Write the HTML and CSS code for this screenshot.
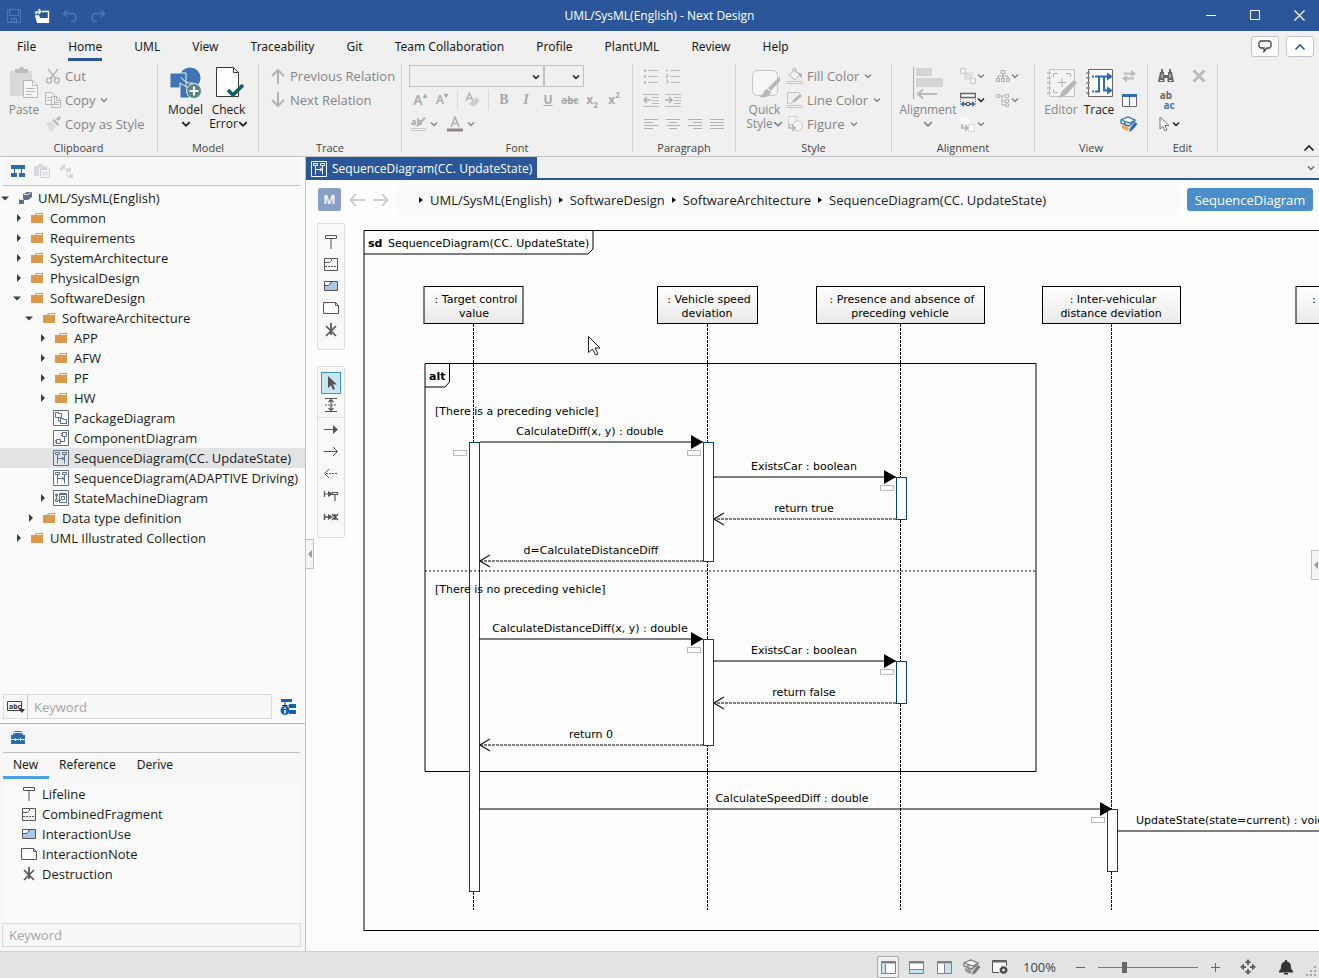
FILE: index.html
```html
<!DOCTYPE html>
<html lang="en">
<head>
  <meta charset="UTF-8">
  <meta name="viewport" content="width=device-width, initial-scale=1.0">
  <title>UML/SysML(English) - Next Design</title>
  <link rel="stylesheet" href="styles.css">
</head>
<body>
  <!-- shared icons -->
  <svg class="defs" width="0" height="0">
    <symbol id="chev" viewBox="0 0 8 8"><path d="M1 2.5l3 3 3-3" fill="none" stroke="currentColor" stroke-width="1.4"/></symbol>
    <symbol id="right" viewBox="0 0 10 10"><path d="M5 1l4 4-4 4z" fill="#3c3c3c"/></symbol>
    <symbol id="down" viewBox="0 0 10 10"><path d="M1 3.5h8L5 7.5z" fill="#3c3c3c"/></symbol>
    <symbol id="folder" viewBox="0 0 16 16"><path d="M2 5h4l1-2h7v10H2z" fill="#d99a4e"/><path d="M7.500 4.500h5.500" stroke="#fff3e0"/></symbol>
    <symbol id="sequence" viewBox="0 0 16 16"><path d="M.5.500h15v15H.500z M2.500 2.500h4v2h-4z M9.500 2.500h4v2h-4z M4.500 4.500v9 M11.500 4.500v9 M5 8.500h6 M9 6.500l2 2-2 2" fill="none" stroke="currentColor"/></symbol>
    <symbol id="package" viewBox="0 0 16 16"><path d="M.5.500h15v15H.500z M2.500 7.500v-5h3v1h3v4z M5.500 8v3h2 M7.500 13.500v-5h3v1h3v4z" fill="none" stroke="currentColor"/></symbol>
    <symbol id="component" viewBox="0 0 16 16"><path d="M.5.500h15v15H.500z M9.500 2.500h4v4h-4z M8 3.500h2 M8 5.500h2 M3.500 9.500h4v4h-4z M2 10.500h2 M2 12.500h2 M8 11.500h3.500V7" fill="none" stroke="currentColor"/></symbol>
    <symbol id="state" viewBox="0 0 16 16"><path d="M.5.500h15v15H.500z M6.500 3.500h7v9h-7z M8.500 6.500h3v3h-3z M6.500 4.500h7 M2.500 9.500h2v2h-2z M3.500 6v3 M5 10.500h3" fill="none" stroke="currentColor"/><circle cx="3.500" cy="5" r="1.500" fill="currentColor"/></symbol>
    <symbol id="lifeline" viewBox="0 0 16 16"><path d="M2.500 1.500h11v3h-11z M8 4.500V15" fill="none" stroke="#555"/></symbol>
    <symbol id="fragment" viewBox="0 0 16 16"><path d="M1.500 2.500h13v12h-13z M1.500 6.500h5l2-2v-2" fill="none" stroke="#555"/><path d="M2 10.500h12" stroke="#555" stroke-dasharray="2 1"/></symbol>
    <symbol id="use" viewBox="0 0 16 16"><path d="M1.500 3.500h13v9h-13z" fill="#a9c8e8" stroke="#555"/><path d="M2 7V4h6L5.500 7z" fill="#fff"/><path d="M1.500 7.500h4l2.500-2.500v-1.500" fill="none" stroke="#555"/></symbol>
    <symbol id="note" viewBox="0 0 16 16"><path d="M.5 2.500h12l3 3v8H.500z" fill="#fff" stroke="#555"/><path d="M12.500 2.500v3h3" fill="none" stroke="#555"/></symbol>
    <symbol id="destroy" viewBox="0 0 16 16"><path d="M8 1v12 M3 4l10 10 M13 4L3 14" stroke="#555" stroke-width="1.700" fill="none"/></symbol>
    <symbol id="pointer" viewBox="0 0 16 16"><path d="M5 1v12l3-2.500 2 4.500 2-1-2-4.500h4z"/></symbol>
    <symbol id="layers" viewBox="0 0 18 16"><path d="M1.500 3.500L8 1l7 3-5 3-6-2z" fill="#fff" stroke="currentColor" stroke-width="1.300"/><path d="M1 4v3l4 1.500M5 5v4l4 1 6-5" fill="none" stroke="currentColor" stroke-width="1.300"/><path class="accent" d="M2 9l6 2 1 2-2 2-5-3z"/><path d="M15 6l2.500 2-5 6-3.500 2 1-4z" fill="currentColor"/></symbol>
  </svg>

  <header class="titlebar">
    <div class="quick">
      <button aria-label="Save" class="dim"><svg width="14" height="14"><path d="M.5.500h13v13H.500z M2.500.500v6h9v-6 M4.500 13.500v-4h5v4 M7.500 10v3" fill="none" stroke="currentColor"/></svg></button>
      <button aria-label="Open"><svg width="16" height="16"><path d="M1 7.500L5 7l1 3h8v5H3z" fill="#fff"/><path d="M8 3.500h6.500V15 M2 6.500V4h4 M4.500 1L7 3.500 4.500 6" fill="none" stroke="#fff" stroke-width="1.400"/></svg></button>
      <button aria-label="Undo" class="dim"><svg width="16" height="14"><path d="M5 1L1.500 4.500 5 8 M2 4.500h8a4 4 0 0 1 0 8H9" fill="none" stroke="currentColor" stroke-width="1.600"/></svg></button>
      <button aria-label="Redo" class="dim"><svg width="16" height="14"><path d="M11 1l3.500 3.500L11 8 M14 4.500H6a4 4 0 0 0 0 8h1" fill="none" stroke="currentColor" stroke-width="1.600"/></svg></button>
    </div>
    <h1>UML/SysML(English) - Next Design</h1>
    <div class="window">
      <button aria-label="Minimize"><svg width="11" height="11"><path d="M0 5.500h10" stroke="#fff"/></svg></button>
      <button aria-label="Maximize"><svg width="11" height="11"><path d="M.5.500h9v9h-9z" fill="none" stroke="#fff"/></svg></button>
      <button aria-label="Close"><svg width="11" height="11"><path d="M.5.500l10 10M10.500.500l-10 10" stroke="#fff" stroke-width="1.200"/></svg></button>
    </div>
  </header>

  <nav class="menu">
    <button>File</button>
    <button class="active">Home</button>
    <button>UML</button>
    <button>View</button>
    <button>Traceability</button>
    <button>Git</button>
    <button>Team Collaboration</button>
    <button>Profile</button>
    <button>PlantUML</button>
    <button>Review</button>
    <button>Help</button>
    <div class="menu-right">
      <button aria-label="Feedback"><svg width="14" height="13"><path d="M2.500 1h9l1.500 1.500v4L11.500 8H9l-3 3.500V8H2.500L1 6.500v-4z" fill="none" stroke="#444" stroke-width="1.300"/></svg></button>
      <button aria-label="Hide ribbon"><svg width="12" height="8"><path d="M1.500 6.500L6 2l4.500 4.500" fill="none" stroke="#2b579a" stroke-width="1.600"/></svg></button>
    </div>
  </nav>

  <section class="ribbon">
    <div class="group clipboard">
      <div class="tools">
        <button class="big off"><svg width="32" height="32"><path d="M2 4h22v25H2z" fill="#d6d8da"/><path d="M7 2h4a2 2 0 0 1 5 0h4v4H7z" fill="#bcbcbc"/><path d="M15.500 13.500h9l5 5v12h-14z" fill="#f6f6f6" stroke="#b8b8b8"/><path d="M24.500 13.500v5h5 M18 21.500h9 M18 24.500h9 M18 27.500h6" fill="none" stroke="#b8b8b8"/></svg><span>Paste</span></button>
        <div class="stack">
          <button class="small off"><svg width="16" height="16"><path d="M3 1l8 10 M13 1L5 11" stroke="#b8b8b8" stroke-width="1.600"/><circle cx="4" cy="12.500" r="2.500" fill="none" stroke="#b8b8b8" stroke-width="1.500"/><circle cx="12" cy="12.500" r="2.500" fill="none" stroke="#b8b8b8" stroke-width="1.500"/></svg>Cut</button>
          <button class="small off"><svg width="16" height="16"><path d="M.5.500h6l3 3v9h-9z M2 5.500h4 M2 8.500h4 M6.500 4.500h5l4 4v7h-9z" fill="#f2f2f2" stroke="#b8b8b8"/><path d="M11.500 4.500v4h4 M9 10.500h5 M9 12.500h5" fill="none" stroke="#b8b8b8"/></svg>Copy<svg class="chev"><use href="#chev"/></svg></button>
          <button class="small off"><svg width="16" height="16"><path d="M1 8l5-3 5 5-3 5H5z" fill="#dcdcdc"/><path d="M7 4l2-1 5 5-1 2z M11 3l3-3 2 2-3 3z" fill="#b8b8b8"/></svg>Copy as Style</button>
        </div>
      </div>
      <h2>Clipboard</h2>
    </div>

    <div class="group model">
      <div class="tools">
        <button class="big"><svg width="32" height="32"><circle cx="20" cy="11" r="10.500" fill="#3f75b5"/><path d="M0 6h16v15H0z" fill="#3f75b5" stroke="#f0f0f0"/><path d="M10 31V16l13 8-1 7z" fill="#3f75b5" stroke="#f0f0f0"/><path d="M11 10q4 7 12 6" fill="none" stroke="#f0f0f0"/><circle cx="24" cy="24" r="7.500" fill="#5b8583" stroke="#f0f0f0"/><path d="M24 19.500v9M19.500 24h9" stroke="#fff" stroke-width="2"/></svg><span>Model</span><svg class="chev"><use href="#chev"/></svg></button>
        <button class="big"><svg width="32" height="32"><path d="M3.500.500h17l5 5v24h-22z" fill="#fff" stroke="#3e3638"/><path d="M20.500.500v5h5" fill="none" stroke="#3e3638"/><path d="M15 23l5 5 10-10" fill="none" stroke="#0c5c68" stroke-width="3.500"/></svg><span>Check</span><span>Error<svg class="chev"><use href="#chev"/></svg></span></button>
      </div>
      <h2>Model</h2>
    </div>

    <div class="group trace">
      <div class="tools">
        <div class="stack">
          <button class="small off"><svg width="16" height="16"><path d="M8 16V2 M2 8l6-6 6 6" fill="none" stroke="#b4b4b4" stroke-width="2"/></svg>Previous Relation</button>
          <button class="small off"><svg width="16" height="16"><path d="M8 0v14 M2 8l6 6 6-6" fill="none" stroke="#b4b4b4" stroke-width="2"/></svg>Next Relation</button>
        </div>
      </div>
      <h2>Trace</h2>
    </div>

    <div class="group font">
      <div class="tools column">
        <div class="line">
          <label class="combo wide"><select aria-label="Font family"></select><svg class="chev"><use href="#chev"/></svg></label>
          <label class="combo"><select aria-label="Font size"></select><svg class="chev"><use href="#chev"/></svg></label>
        </div>
        <div class="line">
          <button class="glyph grow">A<sup>▴</sup></button>
          <button class="glyph shrink">A<sup>▾</sup></button>
          <i class="sep"></i>
          <button class="glyph" aria-label="Clear format"><svg width="16" height="16"><path d="M1 9l3.500-8L8 9M2.500 6.500h4" fill="none" stroke="#b0b0b0" stroke-width="1.400"/><path d="M4 12l7-7 4 4-6 6z" fill="#cfcfd1"/></svg></button>
          <i class="sep"></i>
          <button class="glyph serif">B</button>
          <button class="glyph serif"><em>I</em></button>
          <button class="glyph"><u>U</u></button>
          <button class="glyph"><s>abc</s></button>
          <button class="glyph">x<sub>2</sub></button>
          <button class="glyph">x<sup>2</sup></button>
        </div>
        <div class="line">
          <button class="drop off" aria-label="Highlight"><svg width="18" height="16"><path d="M2.500 12.500h14v2h-14z" fill="#f6f6f6" stroke="#c8c8c8"/><path d="M8 9l7-8 2 1-7 8-3 1z" fill="#b8b8b8"/><text x="2" y="9" class="tiny">ab</text></svg><svg class="chev"><use href="#chev"/></svg></button>
          <button class="drop off" aria-label="Font color"><svg width="18" height="16"><path d="M5 11l4-10 4 10M6.500 7.500h5" fill="none" stroke="#b0b0b0" stroke-width="1.500"/><path d="M1 14h16" stroke="#8e878e" stroke-width="3"/></svg><svg class="chev"><use href="#chev"/></svg></button>
        </div>
      </div>
      <h2>Font</h2>
    </div>

    <div class="group paragraph">
      <div class="tools column">
        <div class="line">
          <button class="glyph" aria-label="Bullets"><svg width="16" height="16"><path d="M1 2.500h2M1 8.500h2M1 14.500h2" stroke="#aaa" stroke-width="2"/><path d="M5 2.500h10M5 8.500h10M5 14.500h10" stroke="#bbb"/></svg></button>
          <button class="glyph" aria-label="Numbering"><svg width="16" height="16"><path d="M2 1v3M1 6.500h2v1.500H1v1.500h2M1 12h2v3H1M5 2.500h10M5 8.500h10M5 14.500h10" fill="none" stroke="#bbb"/></svg></button>
        </div>
        <div class="line">
          <button class="glyph" aria-label="Outdent"><svg width="16" height="14"><path d="M0 1.500h16M9 4.500h7M9 7.500h7M9 10.500h7M0 13.500h16" stroke="#bbb"/><path d="M8 7H1M4 4L1 7l3 3" fill="none" stroke="#b0b0b0" stroke-width="1.500"/></svg></button>
          <button class="glyph" aria-label="Indent"><svg width="16" height="14"><path d="M0 1.500h16M9 4.500h7M9 7.500h7M9 10.500h7M0 13.500h16" stroke="#bbb"/><path d="M0 7h7M4 4l3 3-3 3" fill="none" stroke="#b0b0b0" stroke-width="1.500"/></svg></button>
        </div>
        <div class="line">
          <button class="glyph" aria-label="Align left"><svg width="14" height="12"><path d="M0 1.500h14M0 4.500h9M0 7.500h14M0 10.500h9" stroke="#b0b0b0"/></svg></button>
          <button class="glyph" aria-label="Align center"><svg width="14" height="12"><path d="M0 1.500h14M3 4.500h8M0 7.500h14M3 10.500h8" stroke="#b0b0b0"/></svg></button>
          <button class="glyph" aria-label="Align right"><svg width="14" height="12"><path d="M0 1.500h14M5 4.500h9M0 7.500h14M5 10.500h9" stroke="#b0b0b0"/></svg></button>
          <button class="glyph" aria-label="Justify"><svg width="14" height="12"><path d="M0 1.500h14M0 4.500h14M0 7.500h14M0 10.500h14" stroke="#b0b0b0"/></svg></button>
        </div>
      </div>
      <h2>Paragraph</h2>
    </div>

    <div class="group style">
      <div class="tools">
        <button class="big off"><svg width="32" height="32"><rect x="3.500" y="3.500" width="25" height="25" rx="5" fill="#f6f6f6" stroke="#c4c4c4"/><path d="M31 9v5l-9 10-3-3z M18 22l4 3c-1 5-7 6-12 5 5-2 4-7 8-8z" fill="#b8b8b8"/></svg><span>Quick</span><span>Style<svg class="chev"><use href="#chev"/></svg></span></button>
        <div class="stack">
          <button class="small off"><svg width="16" height="16"><path d="M2 7l6-5 5 5-5 5z M6 4V.500h3V5" fill="#f4f4f4" stroke="#b8b8b8"/><path d="M10 4l5 2v5l-3-4z" fill="#b0b0b0"/><path d="M.5 13.500h15v2H.500z" fill="#f6f6f6" stroke="#c4c4c4"/></svg>Fill Color<svg class="chev"><use href="#chev"/></svg></button>
          <button class="small off"><svg width="16" height="16"><path d="M13 .500H.500v11L5 11" fill="none" stroke="#c4c4c4"/><path d="M6 8l7-6 2 2-7 6-3 1z" fill="#b8b8b8"/><path d="M.5 13.500h15v2H.500z" fill="#f6f6f6" stroke="#c4c4c4"/></svg>Line Color<svg class="chev"><use href="#chev"/></svg></button>
          <button class="small off"><svg width="16" height="16"><path d="M1.500.500h8v8h-8z" fill="#f4f4f4" stroke="#d0d0d0"/><circle cx="10.500" cy="10" r="5" fill="#f4f4f4" stroke="#c8c8c8"/><path d="M2 8v4h5M5 9l3 3-3 3" fill="none" stroke="#b4b4b4" stroke-width="1.500"/></svg>Figure<svg class="chev"><use href="#chev"/></svg></button>
        </div>
      </div>
      <h2>Style</h2>
    </div>

    <div class="group alignment">
      <div class="tools">
        <button class="big off"><svg width="32" height="32"><path d="M1.500 0v32" stroke="#b0aaac"/><path d="M4 1h16v8H4z M4 11h27v9H4z" fill="#d4d5d7"/><path d="M25 27H7M11 22.500L6 27l5 4.500" fill="none" stroke="#bbb" stroke-width="2.200"/></svg><span>Alignment</span><svg class="chev"><use href="#chev"/></svg></button>
        <div class="stack">
          <button class="drop off" aria-label="Order"><svg width="16" height="16"><path d="M4 4h9v8H4z" fill="#dedfe1"/><path d="M.5.500h5v5h-5z M10.500 10.500h5v5h-5z" fill="#f4f4f4" stroke="#c8c8c8"/></svg><svg class="chev"><use href="#chev"/></svg></button>
          <button class="drop" aria-label="Spacing"><svg width="16" height="16"><path d="M.5 1.500h15v4H.500z" fill="#fff" stroke="#6b6467" stroke-width="1.500"/><path d="M.5 7v3M15.500 7v3" stroke="#555" stroke-dasharray="1 1"/><path d="M6.500 10.500h3v3h-3z" fill="none" stroke="#444"/><path d="M0 12l4-3v2h2v2H4v2z M16 12l-4-3v2h-2v2h2v2z" fill="#3f75b5"/></svg><svg class="chev"><use href="#chev"/></svg></button>
          <button class="drop off" aria-label="Rotate"><svg width="16" height="16"><path d="M1 1h8v7H1z" fill="#fafafa"/><path d="M8.500 8.500h6v7h-6z" fill="#fafafa" stroke="#d8d8d8"/><path d="M2 8v4h5M5 9l3 3-3 3" fill="none" stroke="#b4b4b4" stroke-width="1.500"/></svg><svg class="chev"><use href="#chev"/></svg></button>
        </div>
        <div class="stack">
          <button class="drop off" aria-label="Tree layout"><svg width="14" height="14"><path d="M5 1.500h4v3H5z M.500 9.500h3v3h-3z M5.500 9.500h3v3h-3z M10.500 9.500h3v3h-3z M2 9V7h10v2M7 5v4" fill="none" stroke="#aaa"/></svg><svg class="chev"><use href="#chev"/></svg></button>
          <button class="drop off" aria-label="List layout"><svg width="14" height="14"><path d="M.5 1.500h3v3h-3z M9.500 1.500h3v3h-3z M9.500 6.500h3v3h-3z M9.500 11h3v2.500h-3z M4 3h5M6 3v9h3M6 8h3" fill="none" stroke="#b4b4b4"/></svg><svg class="chev"><use href="#chev"/></svg></button>
        </div>
      </div>
      <h2>Alignment</h2>
    </div>

    <div class="group view">
      <div class="tools">
        <button class="big off"><svg width="32" height="32"><path d="M4.500 2.500h25v27h-25z" fill="#f4f4f4" stroke="#c4c4c4"/><path d="M2 6h4M2 11h4M2 16h4M2 21h4M2 26h4" stroke="#b8b8b8" stroke-width="1.500"/><path d="M8.500 10V6.500H13M21 6.500h4.500V10M8.500 22v3.500H13M17 11v9M12.500 15.500h9" fill="none" stroke="#b0b0b0"/><path d="M14 31l3-7 12-11 3 3-11 12z" fill="#b8b8b8"/></svg><span>Editor</span></button>
        <button class="big"><svg width="32" height="32"><path d="M5.500 2.500h24v27h-24z" fill="#fdfdfd" stroke="#6b6467"/><path d="M3 6h4M3 11h4M3 16h4M3 21h4M3 26h4" stroke="#8a8486" stroke-width="1.500"/><path d="M9 9.500h2M9 24.500h2M12 9.500h12M12 24.500h4v-15M21 9.500v14h4" fill="none" stroke="#2f6cb0" stroke-width="2"/><path d="M24 5.500l6 4-6 4zM24 19.500l6 4-6 4z" fill="#2f6cb0"/></svg><span>Trace</span></button>
        <div class="stack">
          <button class="glyph" aria-label="Swap"><svg width="14" height="14"><path d="M2 4.500h8M4 9.500h8" stroke="#bbb" stroke-width="2"/><path d="M9 1l5 3.500L9 8z M5 6L0 9.500 5 13z" fill="#bbb"/></svg></button>
          <button class="glyph" aria-label="Split"><svg width="15" height="13"><path d="M.5.500h14v12H.500zM7.500 3v10" fill="#fff" stroke="#6b6467"/><path d="M0 1.500h15" stroke="#2f6cb0" stroke-width="3"/></svg></button>
          <button class="glyph colorful" aria-label="Layers"><svg width="18" height="16"><use href="#layers"/></svg></button>
        </div>
      </div>
      <h2>View</h2>
    </div>

    <div class="group edit">
      <div class="tools">
        <div class="stack">
          <button class="glyph" aria-label="Find"><svg width="16" height="14"><path d="M2 3h4v3h4V3h4l2 10H9.500V9h-3v4H0z M3 0h2v3H3z M11 0h2v3h-2z" fill="#6b6467"/><path d="M2 11.500h3M11 11.500h3M4 5v4M12 5v4" stroke="#e0e0e0"/></svg></button>
          <button class="glyph replace" aria-label="Replace"><span>ab</span><span class="new">ac</span></button>
          <button class="drop" aria-label="Select"><svg width="16" height="16" fill="#fff" stroke="#777"><use href="#pointer"/></svg><svg class="chev"><use href="#chev"/></svg></button>
        </div>
        <div class="stack">
          <button class="glyph" aria-label="Delete"><svg width="14" height="14"><path d="M1.500 1.500l11 11M12.500 1.500l-11 11" stroke="#bbb" stroke-width="3"/></svg></button>
        </div>
      </div>
      <h2>Edit</h2>
    </div>
    <button class="fold" aria-label="Collapse ribbon"><svg width="12" height="8"><path d="M1.500 6.500L6 2l4.500 4.500" fill="none" stroke="#222" stroke-width="1.700"/></svg></button>
  </section>

  <div class="workspace">
    <aside class="sidebar">
      <div class="panel-tools">
        <button aria-label="Model tree"><svg width="14" height="14"><path d="M0 1h14v4H0z M0 9h6v4H0z M8 9h6v4H8z" fill="#2b6cb0"/><path d="M3.500 5v4M10.500 5v4" stroke="#2b6cb0"/></svg></button>
        <button aria-label="Views"><svg width="16" height="14"><path d="M0 2h4V0h5v2h4v3H5v7H0z" fill="#d8dadd"/><path d="M6.500 5.500h9v8h-9zM8 8.500h6M8 10.500h6" fill="#f7f7f7" stroke="#d0d3d6"/></svg></button>
        <button aria-label="Relations"><svg width="14" height="14"><path d="M0 5l5-5 2 2-5 5z M8 4h4v4H8z M10 10h4v4h-4z" fill="#d4d8dc"/><path d="M4 5h5M7.500 5v7H12" fill="none" stroke="#d4d8dc"/></svg></button>
      </div>
      <ul class="tree">
        <li><svg class="caret"><use href="#down"/></svg><svg class="icon"><path d="M2 9h5v5H2z M6 4l4-2h5v5l-4 3H6z" fill="#5f6f88"/><path d="M2.500 9.500h4M7 4.500h4l3-2" fill="none" stroke="#dfe4ea"/></svg>UML/SysML(English)</li>
        <li class="l1"><svg class="caret"><use href="#right"/></svg><svg class="icon"><use href="#folder"/></svg>Common</li>
        <li class="l1"><svg class="caret"><use href="#right"/></svg><svg class="icon"><use href="#folder"/></svg>Requirements</li>
        <li class="l1"><svg class="caret"><use href="#right"/></svg><svg class="icon"><use href="#folder"/></svg>SystemArchitecture</li>
        <li class="l1"><svg class="caret"><use href="#right"/></svg><svg class="icon"><use href="#folder"/></svg>PhysicalDesign</li>
        <li class="l1"><svg class="caret"><use href="#down"/></svg><svg class="icon"><use href="#folder"/></svg>SoftwareDesign</li>
        <li class="l2"><svg class="caret"><use href="#down"/></svg><svg class="icon"><use href="#folder"/></svg>SoftwareArchitecture</li>
        <li class="l3"><svg class="caret"><use href="#right"/></svg><svg class="icon"><use href="#folder"/></svg>APP</li>
        <li class="l3"><svg class="caret"><use href="#right"/></svg><svg class="icon"><use href="#folder"/></svg>AFW</li>
        <li class="l3"><svg class="caret"><use href="#right"/></svg><svg class="icon"><use href="#folder"/></svg>PF</li>
        <li class="l3"><svg class="caret"><use href="#right"/></svg><svg class="icon"><use href="#folder"/></svg>HW</li>
        <li class="l3"><i class="caret"></i><svg class="icon"><use href="#package"/></svg>PackageDiagram</li>
        <li class="l3"><i class="caret"></i><svg class="icon"><use href="#component"/></svg>ComponentDiagram</li>
        <li class="l3 selected"><i class="caret"></i><svg class="icon"><use href="#sequence"/></svg>SequenceDiagram(CC. UpdateState)</li>
        <li class="l3"><i class="caret"></i><svg class="icon"><use href="#sequence"/></svg>SequenceDiagram(ADAPTIVE Driving)</li>
        <li class="l3"><svg class="caret"><use href="#right"/></svg><svg class="icon"><use href="#state"/></svg>StateMachineDiagram</li>
        <li class="l2"><svg class="caret"><use href="#right"/></svg><svg class="icon"><use href="#folder"/></svg>Data type definition</li>
        <li class="l1"><svg class="caret"><use href="#right"/></svg><svg class="icon"><use href="#folder"/></svg>UML Illustrated Collection</li>
      </ul>
      <div class="search">
        <div class="field">
          <button aria-label="Match mode"><svg width="18" height="14"><path d="M.5 1.500h14v9H.500z" fill="none" stroke="#444"/><text x="2" y="9" class="abc">abc</text><path d="M12 9h6l-3 4z" fill="#333"/></svg></button>
          <input type="text" placeholder="Keyword" aria-label="Search model">
        </div>
        <button aria-label="Search options"><svg width="16" height="16"><path d="M1 0h11v3H1z M9 5h7v4H9z M9 11h7v4H9z" fill="#1561b5"/><path d="M5 3v3M2 6.500h5M7 7h2" stroke="#333"/><circle cx="5" cy="11.500" r="4.500" fill="#1561b5"/><path d="M5 8.500v1.500M5 11v3.500" stroke="#fff" stroke-width="1.500"/></svg></button>
      </div>

      <div class="toolbox">
        <div class="panel-tools"><button aria-label="Toolbox"><svg width="14" height="14"><path d="M2 5V2l2-2h6l2 2v3z M0 4h14v9H0z" fill="#2b6cb0"/><path d="M3 3V1.500h8V3M0 8.500h14M4.500 7v3M9.500 7v3" fill="none" stroke="#e6eef8"/></svg></button></div>
        <div class="tabs">
          <button class="active">New</button>
          <button>Reference</button>
          <button>Derive</button>
        </div>
        <ul class="items">
          <li><svg><use href="#lifeline"/></svg>Lifeline</li>
          <li><svg><use href="#fragment"/></svg>CombinedFragment</li>
          <li><svg><use href="#use"/></svg>InteractionUse</li>
          <li><svg><use href="#note"/></svg>InteractionNote</li>
          <li><svg><use href="#destroy"/></svg>Destruction</li>
        </ul>
        <input class="filter" type="text" placeholder="Keyword" aria-label="Filter toolbox">
      </div>
    </aside>

    <main class="editor">
      <div class="doc-tabs">
        <button class="doc"><svg width="16" height="16"><use href="#sequence"/></svg>SequenceDiagram(CC. UpdateState)</button>
        <button class="more" aria-label="More tabs"><svg class="chev"><use href="#chev"/></svg></button>
      </div>
      <div class="path">
        <span class="mode">M</span>
        <button aria-label="Back"><svg width="16" height="14"><path d="M16 7H1.500M7 1L1.500 7 7 13" fill="none" stroke="#ccc" stroke-width="1.800"/></svg></button>
        <button aria-label="Forward"><svg width="16" height="14"><path d="M0 7h14.500M9 1l5.500 6L9 13" fill="none" stroke="#ccc" stroke-width="1.800"/></svg></button>
        <nav class="crumbs">
          <a href="#">UML/SysML(English)</a>
          <a href="#">SoftwareDesign</a>
          <a href="#">SoftwareArchitecture</a>
          <a href="#">SequenceDiagram(CC. UpdateState)</a>
        </nav>
        <button class="badge">SequenceDiagram</button>
      </div>

      <div class="canvas">
        <div class="palettes">
          <div class="palette shapes">
            <button aria-label="Lifeline"><svg><use href="#lifeline"/></svg></button>
            <button aria-label="CombinedFragment"><svg><use href="#fragment"/></svg></button>
            <button aria-label="InteractionUse"><svg><use href="#use"/></svg></button>
            <button aria-label="InteractionNote"><svg><use href="#note"/></svg></button>
            <button aria-label="Destruction"><svg><use href="#destroy"/></svg></button>
          </div>
          <div class="palette">
            <button class="on" aria-label="Select"><svg fill="#555"><use href="#pointer"/></svg></button>
            <button aria-label="Spacing"><svg><path d="M2 1.500h12M2 14.500h12M8 3v10M5.500 5L8 2.500 10.500 5M5.500 11L8 13.500l2.500-2.500" fill="none" stroke="#555" stroke-width="1.200"/><path d="M2 8h12" stroke="#555" stroke-dasharray="2 1"/></svg></button>
            <hr>
            <button aria-label="Sync message"><svg><path d="M1 8.500h11" stroke="#555"/><path d="M10 4l5 4.500-5 4.500z" fill="#555"/></svg></button>
            <button aria-label="Async message"><svg><path d="M1 8.500h13M10 4l4.500 4.500L10 13" fill="none" stroke="#555"/></svg></button>
            <button aria-label="Reply"><svg><path d="M6 4L1.500 8.500 6 13" fill="none" stroke="#555"/><path d="M3 8.500h12" stroke="#555" stroke-dasharray="2 1"/></svg></button>
            <button aria-label="Create message"><svg><path d="M1.500 4v6M2 7h5M9.500 5.500h5v2h-5zM12 8v6" fill="none" stroke="#555" stroke-width="1.200"/><path d="M5 4l5 3-5 3z" fill="#555"/></svg></button>
            <button aria-label="Destroy message"><svg><path d="M1.500 5v6M2 8h5M9 5l6 6M15 5l-6 6M12 5v6" fill="none" stroke="#555" stroke-width="1.500"/><path d="M5 5l5 3-5 3z" fill="#555"/></svg></button>
          </div>
        </div>

        <!-- sequence diagram -->
        <svg class="diagram" role="img" aria-label="Sequence diagram">
          <defs>
            <linearGradient id="head" x1="0" y1="0" x2="0" y2="1"><stop offset="0" stop-color="#fff"/><stop offset="1" stop-color="#e9e9e9"/></linearGradient>
            <marker id="full" viewBox="0 0 12 14" refX="12" refY="7" markerWidth="12" markerHeight="14" markerUnits="userSpaceOnUse" orient="auto"><path d="M0 0l12 7-12 7z"/></marker>
            <marker id="open" viewBox="0 0 12 14" refX="11" refY="7" markerWidth="12" markerHeight="14" markerUnits="userSpaceOnUse" orient="auto"><path d="M1 1l10 6-10 6" fill="none" stroke="#222" stroke-width="1.300"/></marker>
          </defs>

          <path class="edge" d="M3000 10.500H14V710.500H3000"/>
          <path class="edge" d="M14 34H238l5-5V10.500"/>
          <text x="18" y="27" class="bold">sd</text>
          <text x="38" y="27">SequenceDiagram(CC. UpdateState)</text>

          <path class="life" d="M123.500 104V690M357.500 104V690M550.500 104V690M761.500 104V690"/>

          <path class="edge" d="M75 143.500H686V551.500H75z"/>
          <path class="edge" d="M75 167H95l4.500-5V143.500"/>
          <path class="divider" d="M75 351H686"/>
          <text x="79" y="160" class="bold">alt</text>

          <g class="heads">
            <rect x="74" y="66.500" width="99" height="37"/>
            <rect x="307.500" y="66.500" width="100" height="37"/>
            <rect x="466.500" y="66.500" width="168" height="37"/>
            <rect x="692.500" y="66.500" width="138" height="37"/>
            <rect x="946" y="66.500" width="138" height="37"/>
          </g>
          <g class="middle">
            <text x="126" y="83">: Target control</text><text x="124" y="97">value</text>
            <text x="359" y="83">: Vehicle speed</text><text x="357" y="97">deviation</text>
            <text x="552" y="83">: Presence and absence of</text><text x="550" y="97">preceding vehicle</text>
            <text x="763" y="83">: Inter-vehicular</text><text x="761" y="97">distance deviation</text>
          </g>
          <text x="962" y="83">:</text>

          <g class="bars">
            <rect x="119.500" y="222.500" width="10" height="449"/>
            <rect x="353.500" y="222.500" width="10" height="119"/>
            <rect x="546.500" y="257.500" width="10" height="42"/>
            <rect x="353.500" y="419.500" width="10" height="106"/>
            <rect x="546.500" y="441.500" width="10" height="42"/>
            <rect x="757.500" y="589.500" width="10" height="62"/>
          </g>
          <path class="divider" d="M120 351h10"/>
          <g class="slots">
            <rect x="103.500" y="230.500" width="13" height="5"/>
            <rect x="337.500" y="230.500" width="13" height="5"/>
            <rect x="530.500" y="265.500" width="13" height="5"/>
            <rect x="337.500" y="427.500" width="13" height="5"/>
            <rect x="530.500" y="449.500" width="13" height="5"/>
            <rect x="741.500" y="597.500" width="13" height="5"/>
          </g>

          <g class="calls">
            <path d="M130 222H353"/>
            <path d="M363 257H546"/>
            <path d="M129 419H353"/>
            <path d="M363 441H546"/>
            <path d="M129 589H762"/>
            <path d="M767 611H3000"/>
          </g>
          <g class="returns">
            <path d="M546 299H364"/>
            <path d="M353 341H130"/>
            <path d="M546 483H364"/>
            <path d="M353 525H130"/>
          </g>

          <text x="85" y="195">[There is a preceding vehicle]</text>
          <text x="85" y="373">[There is no preceding vehicle]</text>
          <g class="middle">
            <text x="240" y="215">CalculateDiff(x, y) : double</text>
            <text x="454" y="250">ExistsCar : boolean</text>
            <text x="454" y="292">return true</text>
            <text x="241" y="334">d=CalculateDistanceDiff</text>
            <text x="240" y="412">CalculateDistanceDiff(x, y) : double</text>
            <text x="454" y="434">ExistsCar : boolean</text>
            <text x="454" y="476">return false</text>
            <text x="241" y="518">return 0</text>
            <text x="442" y="582">CalculateSpeedDiff : double</text>
          </g>
          <text x="786" y="604">UpdateState(state=current) : void</text>

          <path d="M238.500 116.500v16l4-3.500 3 6 2.500-1-3-6h5z" fill="#fff" stroke="#222"/>
        </svg>
      </div>
      <button class="handle left" aria-label="Collapse sidebar"></button>
      <button class="handle right" aria-label="Show inspector"></button>
    </main>
  </div>

  <footer class="status">
    <button class="pressed" aria-label="Left pane"><svg width="15" height="13"><path d="M.5.500h14v12H.500z" fill="#fff" stroke="#857e80"/><path d="M1 3h3v9H1z" fill="#c4e4f0"/><path d="M0 1.500h15" stroke="#857e80" stroke-width="2"/><path d="M4.500 3v10" stroke="#857e80"/></svg></button>
    <button aria-label="Bottom pane"><svg width="15" height="13"><path d="M.5.500h14v12H.500z" fill="#fff" stroke="#857e80"/><path d="M1 8h13v4H1z" fill="#c4e4f0"/><path d="M0 1.500h15" stroke="#857e80" stroke-width="2"/><path d="M1 8.500h13" stroke="#857e80"/></svg></button>
    <button aria-label="Right pane"><svg width="15" height="13"><path d="M.5.500h14v12H.500z" fill="#fff" stroke="#857e80"/><path d="M8 3h6v9H8z" fill="#c4e4f0"/><path d="M0 1.500h15" stroke="#857e80" stroke-width="2"/><path d="M7.500 3v9" stroke="#857e80"/></svg></button>
    <button class="mono" aria-label="Layers"><svg width="18" height="16"><use href="#layers"/></svg></button>
    <button aria-label="View settings"><svg width="16" height="14"><path d="M7 12.500H.500V.500h14V6" fill="#fff" stroke="#555"/><path d="M0 1.500h15" stroke="#6b6467" stroke-width="2"/><circle cx="11.500" cy="10" r="2.500" fill="none" stroke="#444" stroke-width="2"/><circle cx="11.500" cy="10" r="3.700" fill="none" stroke="#444" stroke-dasharray="1.400 1.500"/></svg></button>
    <span class="zoom">100%</span>
    <button aria-label="Zoom out"><svg width="11" height="11"><path d="M1 5.500h9" stroke="#666"/></svg></button>
    <input type="range" min="0" max="100" value="25" aria-label="Zoom">
    <button aria-label="Zoom in"><svg width="11" height="11"><path d="M1 5.500h9M5.500 1v9" stroke="#666"/></svg></button>
    <button class="fit" aria-label="Fit"><svg width="16" height="16"><path d="M8 0l3.500 4h-7zM8 16l3.500-4h-7zM0 8l4-3.500v7zM16 8l-4-3.500v7z" fill="#6b6467"/><path d="M8 3v3M8 10v3M3 8h3M10 8h3" stroke="#6b6467" stroke-width="2"/></svg></button>
    <button class="bell" aria-label="Notifications"><svg width="14" height="15"><path d="M6 0h2v1.500c3 .5 4 3 4 5.500 0 2 1 3 2 4v1.500H0V11c1-1 2-2 2-4 0-2.500 1-5 4-5.500z M5 13h4v1.500H5z" fill="#333"/></svg></button>
    <svg class="grip" width="12" height="12"><path d="M9 0h2v2H9zM5 4h2v2H5zM9 4h2v2H9zM1 8h2v2H1zM5 8h2v2H5zM9 8h2v2H9z" fill="#b0a4a4"/></svg>
  </footer>
</body>
</html>
```

FILE: styles.css
```css
* {
  box-sizing: border-box;
}
body {
  margin: 0;
  height: 100vh;
  display: flex;
  flex-direction: column;
  overflow: hidden;
  font-family: "Open Sans", sans-serif;
  font-size: 12px;
  line-height: 14px;
  color: #1a1a1a;
  background: #fff;
}
button {
  margin: 0;
  padding: 0;
  border: 0;
  background: none;
  font: inherit;
  color: inherit;
  display: flex;
  align-items: center;
  justify-content: center;
}
input {
  font: inherit;
}
ul {
  list-style: none;
  margin: 0;
  padding: 0;
}
h1, h2 {
  margin: 0;
  font-weight: normal;
}
svg {
  flex: none;
}
.defs {
  position: absolute;
}
.chev {
  width: 8px;
  height: 8px;
}

/* title bar */
.titlebar {
  flex: none;
  height: 31px;
  display: grid;
  grid-template-columns: 1fr auto 1fr;
  align-items: center;
  background: #2b579a;
  color: #fff;
}
.titlebar h1 {
  font-size: 12px;
}
.quick, .window {
  display: flex;
}
.quick button {
  width: 28px;
  height: 30px;
}
.quick .dim {
  color: #4a7ab8;
}
.window {
  justify-content: flex-end;
  gap: 4px;
}
.window button {
  width: 40px;
  height: 30px;
}

/* menu */
.menu {
  flex: none;
  height: 33px;
  display: flex;
  align-items: flex-start;
  gap: 32px;
  padding: 5px 5px 0 17px;
  background: #f0f0f0;
}
.menu, .tabs {
  font-family: "Noto Sans", sans-serif;
}
.menu > button {
  height: 25px;
  padding-bottom: 1px;
  border-bottom: 3px solid transparent;
}
.menu > .active {
  border-color: #2b579a;
}
.menu-right {
  display: flex;
  gap: 7px;
  margin-left: auto;
}
.menu-right button {
  width: 28px;
  height: 21px;
  border: 1px solid #c4c4c4;
  border-radius: 3px;
  background: #fff;
}

/* ribbon */
.ribbon {
  flex: none;
  height: 93px;
  display: flex;
  background: #f0f0f0;
  border-bottom: 1px solid #c2c2c2;
}
.group {
  height: 88px;
  padding: 0 7px;
  border-right: 1px solid #d2d2d4;
}
.group h2 {
  font-size: 11px;
  color: #444;
  text-align: center;
  padding-top: 5px;
}
.tools {
  display: flex;
  height: 72px;
}
.column {
  flex-direction: column;
}
.line {
  display: flex;
  align-items: center;
  height: 24px;
}
.clipboard { width: 158px; }
.model { width: 101px; }
.trace { width: 143px; }
.font { width: 231px; }
.paragraph { width: 103px; }
.style { width: 156px; }
.alignment { width: 143px; }
.view { width: 113px; }
.edit { width: 70px; }

.big {
  width: 43px;
  flex-direction: column;
  justify-content: flex-start;
  padding-top: 3px;
}
.big > svg:first-child {
  margin-bottom: 4px;
}
.big span {
  display: flex;
  align-items: center;
}
.big .chev {
  width: 10px;
  height: 10px;
}
.big > .chev {
  margin-top: 2px;
}
.view .big {
  width: 38px;
}
.clipboard .big {
  width: 34px;
}
.alignment .big {
  width: 66px;
}
.model .tools {
  margin-left: -1px;
}
.off {
  color: #858585;
}
.stack {
  display: flex;
  flex-direction: column;
}
.small {
  height: 24px;
  justify-content: flex-start;
  gap: 4px;
  padding-left: 4px;
  font-size: 13px;
  white-space: nowrap;
}
.style .small {
  padding-left: 1px;
}
.small .chev {
  margin-left: 1px;
}
.glyph {
  width: 22px;
  height: 24px;
  font-size: 12px;
  font-weight: bold;
  color: #a8a8a8;
}
.glyph sup, .glyph sub {
  font-size: 8px;
  line-height: 8px;
}
.glyph sup {
  align-self: flex-start;
  padding-top: 3px;
}
.glyph sub {
  align-self: flex-end;
  padding-bottom: 3px;
}
.glyph s {
  font-size: 10px;
}
.grow, .shrink {
  font-weight: 600;
}
.grow {
  font-size: 14px;
}
.serif {
  font-family: "Liberation Serif", serif;
  font-size: 14px;
}
.sep {
  width: 1px;
  height: 20px;
  margin: 0 4px;
  background: #dcdcdc;
}
.combo {
  position: relative;
  width: 40px;
  height: 22px;
}
.combo.wide {
  width: 135px;
}
.combo select {
  appearance: none;
  width: 100%;
  height: 22px;
  border: 1px solid #c2c2c2;
  background: #f0f0f0;
}
.combo .chev {
  position: absolute;
  right: 4px;
  top: 8px;
}
.drop {
  height: 24px;
  gap: 3px;
  padding-right: 8px;
}
.alignment .drop, .edit .drop {
  gap: 1px;
}
.alignment .stack {
  padding-left: 3px;
}
.tiny {
  font-size: 9px;
  font-weight: bold;
  fill: #a8a8a8;
}
.view .glyph, .edit .glyph {
  width: 22px;
}
.colorful {
  color: #2f6cb0;
}
.accent {
  fill: var(--accent, #e8a850);
}
.edit .replace {
  flex-direction: column;
  font-size: 10px;
  line-height: 10px;
  color: #666;
}
.replace .new {
  color: #3f75b5;
  padding-left: 6px;
}
.fold {
  align-self: flex-end;
  width: 20px;
  height: 16px;
  margin-left: auto;
}

/* sidebar */
.workspace {
  flex: 1;
  min-height: 0;
  display: flex;
}
.sidebar {
  width: 306px;
  flex: none;
  display: flex;
  flex-direction: column;
  background: #fafafa;
  border-right: 1px solid #c2c2c2;
}
.panel-tools {
  flex: none;
  display: flex;
  height: 29px;
  margin: 0 5px 0 3px;
  padding-left: 3px;
  border-bottom: 1px solid #c2c2c2;
  background: #f7f7f7;
}
.panel-tools button {
  width: 24px;
}
.tree {
  flex: 1;
  min-height: 0;
  padding-top: 2px;
  font-size: 13px;
  overflow: hidden;
}
.tree li {
  display: flex;
  align-items: center;
  height: 20px;
  white-space: nowrap;
}
.caret {
  width: 10px;
  height: 10px;
  flex: none;
}
.icon {
  width: 16px;
  height: 16px;
  margin: 0 5px 0 7px;
  color: #5f6f88;
}
.l1 { padding-left: 12px; }
.l2 { padding-left: 24px; }
.l3 { padding-left: 36px; }
.tree .selected {
  background: #e2e3e5;
}
.search {
  flex: none;
  display: flex;
  height: 29px;
  padding: 0 9px 4px 3px;
  gap: 8px;
}
.field {
  flex: 1;
  display: flex;
  border: 1px solid #dcdcdc;
  background: #f7f7f7;
}
.field button {
  width: 24px;
  border-right: 1px solid #c8c8c8;
}
.abc {
  font-size: 7px;
  font-weight: bold;
  fill: #333;
}
.field input {
  flex: 1;
  min-width: 0;
  border: 0;
  padding: 0 6px;
  background: none;
  font-size: 13px;
}
input::placeholder {
  color: #a6a6a6;
}
.toolbox {
  flex: none;
  height: 228px;
  display: flex;
  flex-direction: column;
  background: #f7f7f7;
  border-top: 1px solid #b4b4b4;
  padding-bottom: 4px;
}
.tabs {
  display: flex;
  height: 26px;
  margin-left: 3px;
}
.tabs button {
  padding: 0 11px 0 10px;
  border-bottom: 3px solid transparent;
}
.tabs .active {
  border-color: #4aa0e0;
}
.items {
  flex: 1;
  margin: 4px 4px 0 2px;
  padding-top: 1px;
  background: #fafafa;
  font-size: 13px;
}
.items li {
  display: flex;
  align-items: center;
  gap: 5px;
  height: 20px;
  padding-left: 19px;
}
.items svg {
  width: 16px;
  height: 16px;
}
.filter {
  height: 24px;
  margin: 0 4px 0 2px;
  padding: 0 6px;
  border: 1px solid #dcdcdc;
  background: #f7f7f7;
  font-size: 13px;
}

/* editor */
.editor {
  position: relative;
  flex: 1;
  min-width: 0;
  display: flex;
  flex-direction: column;
  background: #fdfdfd;
}
.doc-tabs {
  flex: none;
  display: flex;
  justify-content: space-between;
  height: 23px;
  background: #f0f0f0;
  border-bottom: 2px solid #2b579a;
}
.doc {
  gap: 5px;
  padding: 2px 5px 0;
  background: #2b579a;
  color: #fff;
}
.more {
  width: 16px;
  color: #666;
}
.path {
  flex: none;
  display: flex;
  align-items: center;
  height: 40px;
  padding: 0 6px 1px 12px;
  gap: 8px;
  font-size: 13px;
}
.mode {
  width: 23px;
  height: 23px;
  line-height: 23px;
  text-align: center;
  font-weight: bold;
  border-radius: 2px;
  background: #8a9fc4;
  color: #f0f3f8;
}
.crumbs {
  flex: 1;
  display: flex;
  align-items: center;
  height: 30px;
  padding-left: 15px;
  border-radius: 4px;
  background: #f9f9f9;
  white-space: nowrap;
}
.crumbs a {
  color: #1a1a1a;
  text-decoration: none;
}
.crumbs a::before {
  content: "";
  display: inline-block;
  border: 3px solid transparent;
  border-left: 4px solid #111;
  border-right: 0;
  margin: 0 7px 2px;
}
.badge {
  width: 126px;
  height: 23px;
  border-radius: 3px;
  background: #4a8fcb;
  color: #fff;
}
.canvas {
  flex: 1;
  min-height: 0;
  display: flex;
}
.palettes {
  flex: none;
  width: 44px;
  padding: 3px 5px 0 11px;
}
.palette {
  border: 1px solid #dedede;
  border-radius: 2px;
  background: #f9f9f9;
  padding: 5px 0 9px;
}
.shapes {
  padding: 7px 0 8px;
  margin-bottom: 16px;
}
.palette button {
  width: 20px;
  height: 22px;
  margin: 0 auto;
}
.palette svg {
  width: 16px;
  height: 16px;
}
.palette .on {
  background: #c8e6f2;
  border: 1px solid #3a94d6;
}
.palette hr {
  margin: 1px 0 0;
  border: 0;
  border-top: 1px solid #dedede;
}
.diagram {
  flex: 1;
  min-width: 0;
  height: 100%;
  overflow: hidden;
  font-family: "DejaVu Sans", sans-serif;
  font-size: 11px;
}
.bold { font-weight: bold; }
.middle { text-anchor: middle; }
.edge {
  fill: none;
  stroke: #000;
}
.life {
  fill: none;
  stroke: #000;
  stroke-dasharray: 3 1;
}
.divider {
  stroke: #111;
  stroke-dasharray: 2 2;
}
.heads rect {
  fill: url(#head);
  stroke: #000;
}
.bars rect {
  fill: #fff;
  stroke: #00466f;
}
.slots rect {
  fill: #fff;
  stroke: #bbb;
}
.calls path {
  stroke: #000;
  marker-end: url(#full);
}
.returns path {
  stroke: #000;
  stroke-dasharray: 3 1;
  marker-end: url(#open);
}
.handle {
  position: absolute;
  width: 8px;
  height: 30px;
  border: 1px solid #c2c2c2;
  background: #f4f4f4;
}
.handle::after {
  content: "";
  border: 4px solid transparent;
  border-right: 4px solid #a09898;
  border-left: 0;
}
.left {
  left: 0;
  top: 382px;
  border-left: 0;
}
.right {
  right: 0;
  top: 393px;
  border-right: 0;
}

/* status bar */
.status {
  flex: none;
  display: flex;
  align-items: center;
  justify-content: flex-end;
  height: 27px;
  padding: 4px 2px 0 0;
  border-top: 1px solid #cfd2d5;
  background: #e1e3e5;
}
.status button {
  width: 28px;
  height: 22px;
}
.status .pressed {
  width: 22px;
  margin-right: 3px;
  border: 1px solid #aaa;
  border-radius: 2px;
  background: #f0f0f0;
}
.status .mono {
  color: #777;
  --accent: #999;
}
.zoom {
  width: 48px;
  margin-left: 4px;
  padding-left: 5px;
  font-size: 13px;
  color: #444;
}
.status input {
  appearance: none;
  width: 100px;
  height: 12px;
  margin: 0 3px 0 4px;
  background: linear-gradient(#777, #777) center / 100% 1px no-repeat;
}
.status input::-webkit-slider-thumb {
  appearance: none;
  width: 5px;
  height: 11px;
  background: #6b6467;
}
.status .fit, .status .bell {
  width: 38px;
}
.grip {
  align-self: flex-end;
}
```
